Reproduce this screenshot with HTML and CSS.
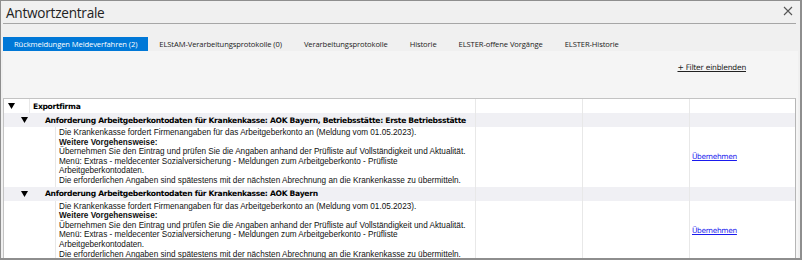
FILE: index.html
```html
<!DOCTYPE html>
<html lang="de">
<head>
  <meta charset="UTF-8" />
  <title>Antwortzentrale</title>
  <link rel="stylesheet" href="styles.css">
</head>
<body>
  <div class="window">
    <div class="titlebar">
      <span class="title">Antwortzentrale</span>
      <svg class="close" width="10" height="10" viewBox="0 0 10 10"><path d="M1 1L9 9M9 1L1 9" stroke="#555" stroke-width="1.1"/></svg>
    </div>

    <div class="tabs">
      <div class="tab active">Rückmeldungen Meldeverfahren (2)</div>
      <div class="tab">ELStAM-Verarbeitungsprotokolle (0)</div>
      <div class="tab">Verarbeitungsprotokolle</div>
      <div class="tab">Historie</div>
      <div class="tab">ELSTER-offene Vorgänge</div>
      <div class="tab">ELSTER-Historie</div>
    </div>

    <div class="content">
      <div class="toolbar">
        <a class="filter" href="#">+ Filter einblenden</a>
      </div>

      <div class="grid">
        <div class="row firm">
          <div class="main">
            <span class="tri"><svg width="7" height="6" viewBox="0 0 7 6"><path d="M0 0H7L3.5 6Z" fill="#000"/></svg></span>
            <span class="label">Exportfirma</span>
          </div>
          <div class="cell"></div><div class="cell"></div><div class="cell"></div>
        </div>

        <div class="row group">
          <div class="main">
            <span class="tri"><svg width="7" height="6" viewBox="0 0 7 6"><path d="M0 0H7L3.5 6Z" fill="#000"/></svg></span>
            <span class="label">Anforderung Arbeitgeberkontodaten für Krankenkasse: AOK Bayern, Betriebsstätte: Erste Betriebsstätte</span>
          </div>
          <div class="cell"></div><div class="cell"></div><div class="cell"></div>
        </div>
        <div class="row detail">
          <div class="main">
            <div class="text">
              Die Krankenkasse fordert Firmenangaben für das Arbeitgeberkonto an (Meldung vom 01.05.2023).<br>
              <b>Weitere Vorgehensweise:</b><br>
              Übernehmen Sie den Eintrag und prüfen Sie die Angaben anhand der Prüfliste auf Vollständigkeit und Aktualität.<br>
              Menü: Extras - meldecenter Sozialversicherung - Meldungen zum Arbeitgeberkonto - Prüfliste<br>
              Arbeitgeberkontodaten.<br>
              Die erforderlichen Angaben sind spätestens mit der nächsten Abrechnung an die Krankenkasse zu übermitteln.
            </div>
          </div>
          <div class="cell"></div><div class="cell"></div>
          <div class="cell action"><a href="#">Übernehmen</a></div>
        </div>

        <div class="row group">
          <div class="main">
            <span class="tri"><svg width="7" height="6" viewBox="0 0 7 6"><path d="M0 0H7L3.5 6Z" fill="#000"/></svg></span>
            <span class="label">Anforderung Arbeitgeberkontodaten für Krankenkasse: AOK Bayern</span>
          </div>
          <div class="cell"></div><div class="cell"></div><div class="cell"></div>
        </div>
        <div class="row detail">
          <div class="main">
            <div class="text">
              Die Krankenkasse fordert Firmenangaben für das Arbeitgeberkonto an (Meldung vom 01.05.2023).<br>
              <b>Weitere Vorgehensweise:</b><br>
              Übernehmen Sie den Eintrag und prüfen Sie die Angaben anhand der Prüfliste auf Vollständigkeit und Aktualität.<br>
              Menü: Extras - meldecenter Sozialversicherung - Meldungen zum Arbeitgeberkonto - Prüfliste<br>
              Arbeitgeberkontodaten.<br>
              Die erforderlichen Angaben sind spätestens mit der nächsten Abrechnung an die Krankenkasse zu übermitteln.
            </div>
          </div>
          <div class="cell"></div><div class="cell"></div>
          <div class="cell action"><a href="#">Übernehmen</a></div>
        </div>
      </div>
    </div>
  </div>
</body>
</html>
```

FILE: styles.css
```css
* { margin: 0; padding: 0; box-sizing: border-box; }
body {
  background: #fff;
  font-family: 'Liberation Sans', Arial, sans-serif;
  color: #000;
}
.window {
  width: 802px;
  height: 260px;
  border: 1px solid #8e8e8e;
  border-bottom-width: 2px;
  border-right-width: 2px;
  background: #f0f0f0;
  padding: 0 2px;
  overflow: hidden;
  display: flex;
  flex-direction: column;
}
.titlebar {
  height: 23px;
  flex: none;
  display: flex;
  align-items: center;
  justify-content: space-between;
  border-bottom: 1px solid #a6a6a6;
  margin-right: 2px;
  padding: 0 3px 0 3px;
}
.title {
  font-family: 'Open Sans', 'Noto Sans', sans-serif;
  font-size: 13.6px;
  color: #222;
  letter-spacing: -0.25px;
}
.close { margin-top: -2px; }
.tabs {
  margin-top: 13px;
  height: 14px;
  display: flex;
  flex: none;
}
.tab {
  font-family: 'Open Sans', 'Noto Sans', sans-serif;
  font-size: 7.6px;
  line-height: 14px;
  color: #222;
  padding: 0 11px;
  letter-spacing: -0.1px;
}
.tab.active {
  background: #0078d7;
  color: #fff;
}
.content {
  flex: 1;
  background: #f5f5f5;
  display: flex;
  flex-direction: column;
}
.toolbar {
  height: 47px;
  flex: none;
  display: flex;
  justify-content: flex-end;
  padding: 12px 52px 0 0;
}
.filter {
  font-family: 'DejaVu Sans', sans-serif;
  font-size: 7.6px;
  color: #222;
  letter-spacing: -0.2px;
}
.grid {
  flex: 1;
  background: #fff;
  border-top: 1px solid #c3c3c3;
  border-left: 1px solid #c3c3c3;
  border-right: 1px solid #b5b5b5;
  margin-right: 2px;
}
.row {
  display: grid;
  grid-template-columns: 471px 107px 107px 1fr;
}
.cell { border-left: 1px solid #e8e8e8; }
.main { display: flex; align-items: center; }
.firm, .group { height: 14px; }
.group { background: #f0f0f4; }
.tri {
  display: flex;
  align-items: center;
  justify-content: flex-start;
  height: 100%;
}
.firm .tri {
  width: 26px;
  padding-left: 4px;
  border-right: 1px solid #e8e8e8;
}
.group .tri {
  width: 40px;
  padding-left: 17px;
}
.label {
  font-family: 'DejaVu Sans', sans-serif;
  font-weight: bold;
  font-size: 7.6px;
  letter-spacing: -0.3px;
  padding-left: 3px;
  white-space: nowrap;
}
.group .label { padding-left: 1px; }
.detail .main {
  padding-left: 51px;
}
.detail .text {
  border-left: 1px solid #e8e8e8;
  padding: 1px 0 1px 3px;
  font-size: 8.2px;
  line-height: 9.6px;
  color: #111;
  white-space: nowrap;
  height: 100%;
}
.detail .text b { font-weight: bold; }
.action {
  display: flex;
  align-items: center;
  padding-left: 2px;
}
.action a {
  font-family: 'DejaVu Sans', sans-serif;
  font-size: 7.4px;
  letter-spacing: -0.3px;
  color: #1a1aee;
}
```
